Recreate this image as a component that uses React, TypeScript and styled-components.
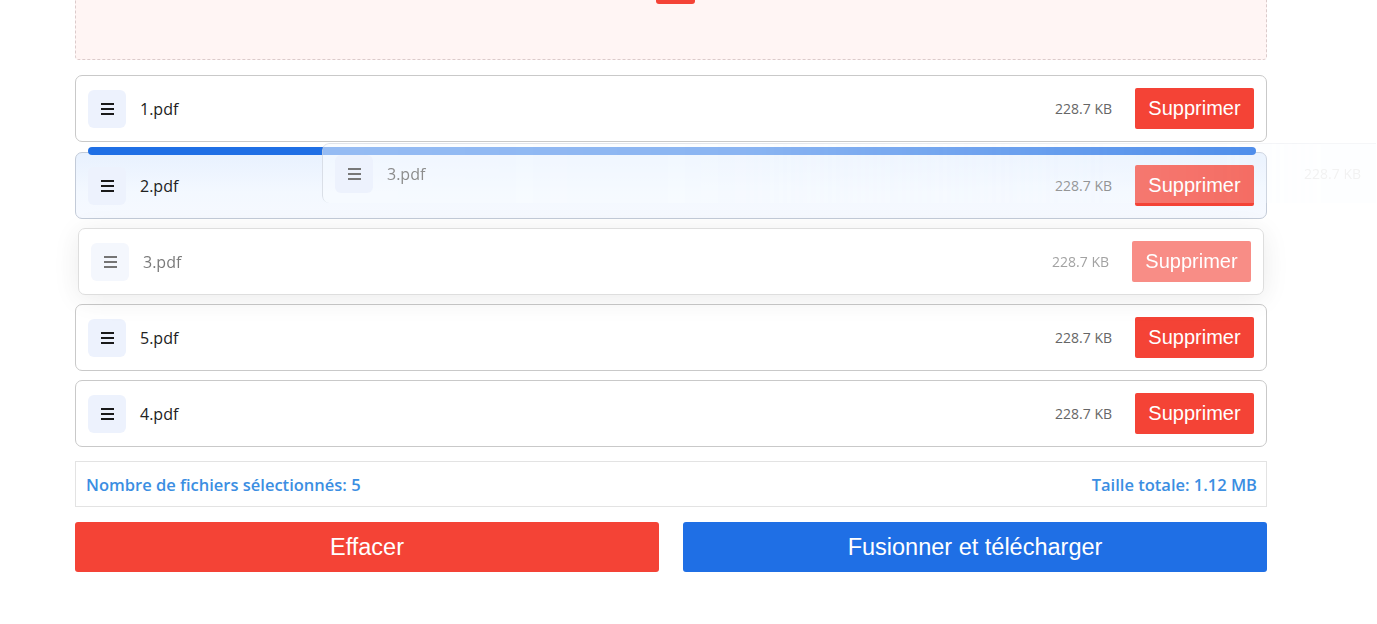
import React from "react";
import styled, { createGlobalStyle, css } from "styled-components";

const Global = createGlobalStyle`
  html, body { margin: 0; padding: 0; background: #fff; overflow: hidden; }
  body { font-family: "Open Sans", "Liberation Sans", sans-serif; }
  * { box-sizing: border-box; }
`;

const Page = styled.div`
  width: 1377px;
  height: 624px;
  padding-left: 75px;
  overflow: hidden;
`;

const Column = styled.div`
  width: 1192px;
  display: flex;
  flex-direction: column;
  gap: 15px;
`;

const DropZone = styled.div`
  margin-top: -60px;
  height: 120px;
  border: 1px dashed #dccbcb;
  border-radius: 4px;
  background: #fff5f4;
  display: flex;
  justify-content: center;
  align-items: flex-start;
  padding-top: 40px;
`;

const UploadButton = styled.div`
  margin-left: 9px;
  width: 39px;
  height: 23px;
  border-radius: 0 0 3px 3px;
  background: #f44336;
`;

const List = styled.div`
  position: relative;
  display: flex;
  flex-direction: column;
  gap: 9px;
`;

type RowState = "normal" | "target" | "dragging";

const Row = styled.div<{ $state?: RowState }>`
  height: 67px;
  display: flex;
  align-items: center;
  padding: 0 12px 0 12px;
  border: 1px solid #c9c9c9;
  border-radius: 7px;
  background: #fff;
  ${(p) =>
    p.$state === "target" &&
    css`
      margin-top: 1px;
      border-color: #c3cbd8;
      background: linear-gradient(180deg, #e8f1fe 0%, #f3f8ff 60%, #f6f9ff 100%);
    `}
  ${(p) =>
    p.$state === "dragging" &&
    css`
      margin: 0 3px;
      opacity: 0.6;
      box-shadow: 0 4px 28px rgba(0, 0, 0, 0.14);
    `}
`;

const Handle = styled.div`
  width: 38px;
  height: 38px;
  border-radius: 6px;
  background: #edf2fd;
  display: flex;
  align-items: center;
  justify-content: center;
  flex-shrink: 0;
`;

const FileName = styled.span`
  margin-left: 14px;
  font-size: 16px;
  color: #222;
  flex: 1;
`;

const FileSize = styled.span`
  font-size: 14px;
  color: #666;
  margin-right: 23px;
`;

const DeleteButton = styled.button`
  width: 119px;
  height: 41px;
  border: none;
  border-radius: 2px;
  background: #f44336;
  color: #fff;
  font-family: "Liberation Sans", Arial, sans-serif;
  font-size: 20px;
  padding: 0;
`;

const DropBar = styled.div`
  position: absolute;
  left: 13px;
  top: 72px;
  width: 1168px;
  height: 8px;
  border-radius: 4px;
  background: #1f6fe5;
  z-index: 2;
`;

const Ghost = styled.div`
  position: absolute;
  left: 247px;
  top: 68px;
  width: 1054px;
  height: 60px;
  display: flex;
  align-items: center;
  padding: 0 0 0 12px;
  border-top: 1px solid rgba(200, 205, 215, 0.5);
  border-left: 1px solid rgba(200, 205, 215, 0.6);
  border-radius: 7px 0 0 7px;
  background: rgba(248, 251, 255, 0.55);
  z-index: 3;
  -webkit-mask-image: linear-gradient(90deg, rgba(0,0,0,1) 0%, rgba(0,0,0,0.9) 40%, rgba(0,0,0,0.35) 95%);
  mask-image: linear-gradient(90deg, rgba(0,0,0,1) 0%, rgba(0,0,0,0.9) 40%, rgba(0,0,0,0.35) 95%);
`;

const GhostName = styled(FileName)`
  color: #8a8a8a;
`;

const GhostSize = styled(FileSize)`
  color: #d9d9d9;
  margin-right: 15px;
`;

const Summary = styled.div`
  margin-top: -1px;
  height: 46px;
  border: 1px solid #e3e3e3;
  display: flex;
  align-items: center;
  justify-content: space-between;
  padding: 0 9px 0 10px;
  color: #3b8ee2;
  font-weight: 600;
  font-size: 16.5px;
`;

const Actions = styled.div`
  display: grid;
  grid-template-columns: 1fr 1fr;
  gap: 24px;
`;

const ActionButton = styled.button<{ $variant: "danger" | "primary" }>`
  height: 50px;
  border: none;
  border-radius: 3px;
  color: #fff;
  font-family: "Liberation Sans", Arial, sans-serif;
  font-size: 23.5px;
  background: ${(p) => (p.$variant === "danger" ? "#f44336" : "#1f6fe5")};
`;

const MenuIcon = ({ color = "#1a1a1a" }: { color?: string }) => (
  <svg width="13" height="12" viewBox="0 0 13 12">
    <rect x="0" y="0" width="13" height="2" fill={color} />
    <rect x="0" y="5" width="13" height="2" fill={color} />
    <rect x="0" y="10" width="13" height="2" fill={color} />
  </svg>
);

const files: { name: string; state: RowState }[] = [
  { name: "1.pdf", state: "normal" },
  { name: "2.pdf", state: "target" },
  { name: "3.pdf", state: "dragging" },
  { name: "5.pdf", state: "normal" },
  { name: "4.pdf", state: "normal" },
];

export default function App() {
  return (
    <>
      <Global />
      <Page>
        <Column>
          <DropZone>
            <UploadButton />
          </DropZone>
          <List>
            {files.map((f) => (
              <Row key={f.name} $state={f.state}>
                <Handle>
                  <MenuIcon />
                </Handle>
                <FileName>{f.name}</FileName>
                <FileSize>228.7 KB</FileSize>
                <DeleteButton>Supprimer</DeleteButton>
              </Row>
            ))}
            <DropBar />
            <Ghost>
              <Handle>
                <MenuIcon color="#777" />
              </Handle>
              <GhostName>3.pdf</GhostName>
              <GhostSize>228.7 KB</GhostSize>
            </Ghost>
          </List>
          <Summary>
            <span>Nombre de fichiers sélectionnés: 5</span>
            <span>Taille totale: 1.12 MB</span>
          </Summary>
          <Actions>
            <ActionButton $variant="danger">Effacer</ActionButton>
            <ActionButton $variant="primary">Fusionner et télécharger</ActionButton>
          </Actions>
        </Column>
      </Page>
    </>
  );
}
